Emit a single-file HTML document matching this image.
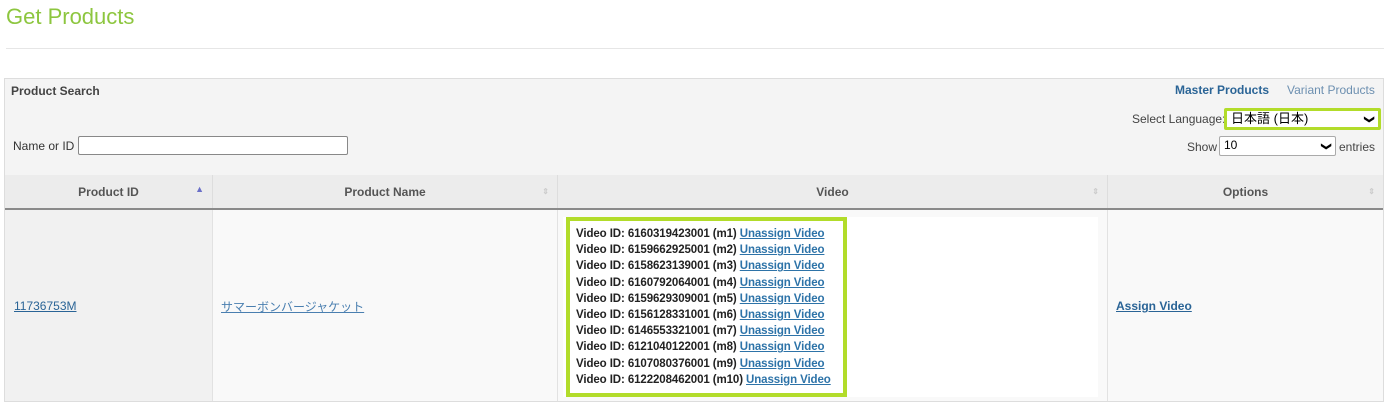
<!DOCTYPE html>
<html><head><meta charset="utf-8"><style>
*{box-sizing:border-box;margin:0;padding:0}
body{width:1396px;height:406px;background:#fff;font-family:"Liberation Sans",Arial,"Noto Sans CJK JP",sans-serif;font-size:12px;color:#333;position:relative;overflow:hidden}
.a{position:absolute}
h1{position:absolute;left:6px;top:4px;font-size:22px;font-weight:normal;color:#8dc63f}
.hr{left:6px;top:48px;width:1378px;height:1px;background:#e6e6e6}
.panel{left:4px;top:78px;width:1380px;height:324px;background:#f4f4f4;border:1px solid #ddd}
.inp{background:#fff;border:1px solid #888;border-radius:2px}
.sel{background:#fff;border:1px solid #aaa;border-radius:2px;font-size:12px;padding-left:4px;line-height:17px;color:#000}
.chev{position:absolute;right:5px;top:1px;font-size:10px;font-weight:bold;transform:rotate(90deg)}
.th{position:absolute;top:175px;height:34px;background:#ececec;border-right:1px solid #ddd;text-align:center;line-height:34px;font-weight:bold;color:#555}
.th .s{position:absolute;right:8px;top:0;font-size:8px;color:#ccc}
.hline{left:5px;top:208px;width:1378px;height:2px;background:#8a8a8a}
.td{position:absolute;top:210px;height:191px;background:#f9f9f9;border-right:1px solid #e2e2e2}
a{color:#2a6496;text-decoration:underline}
.vid{left:566px;top:217px;width:281px;height:180px;border:4px solid #b2dc2a;background:#fff;padding:5px 0 0 6px;font-weight:bold;font-size:11.5px;line-height:16.2px;color:#222;white-space:nowrap;letter-spacing:-0.1px}
.vid a{color:#2d73a8}
</style></head><body>
<h1>Get Products</h1>
<div class="a hr"></div>
<div class="a panel"></div>
<div class="a" style="left:11px;top:84px;font-weight:bold;color:#444">Product Search</div>
<div class="a" style="left:13px;top:139px">Name or ID</div>
<div class="a inp" style="left:78px;top:136px;width:270px;height:19px"></div>
<div class="a" style="left:1175px;top:83px;font-weight:bold;color:#2a6496">Master Products</div>
<div class="a" style="left:1287px;top:83px;color:#6c8fb0">Variant Products</div>
<div class="a" style="left:1132px;top:112px;color:#444">Select Language:</div>
<div class="a sel" style="left:1224px;top:108px;width:157px;height:22px;border:3px solid #b2dc2a;line-height:15px;font-size:13px">日本語 (日本)<span class="chev">&#10095;</span></div>
<div class="a" style="left:1187px;top:140px;color:#444">Show</div>
<div class="a sel" style="left:1219px;top:136px;width:117px;height:20px">10<span class="chev">&#10095;</span></div>
<div class="a" style="left:1339px;top:140px;color:#444">entries</div>

<div class="th" style="left:5px;width:208px">Product ID<span class="s" style="color:#6a6fc8;font-size:9px;top:-3px">&#9650;</span></div>
<div class="th" style="left:213px;width:345px">Product Name<span class="s">&#8661;</span></div>
<div class="th" style="left:558px;width:550px">Video<span class="s">&#8661;</span></div>
<div class="th" style="left:1108px;width:275px;border-right:none">Options<span class="s">&#8661;</span></div>
<div class="a hline"></div>

<div class="td" style="left:5px;width:208px;background:#f1f1f1"></div>
<div class="td" style="left:213px;width:345px"></div>
<div class="td" style="left:558px;width:550px"></div>
<div class="td" style="left:1108px;width:275px;border-right:none"></div>
<div class="a" style="left:563px;top:217px;width:535px;height:180px;background:#fff"></div>
<div class="a" style="left:5px;top:401px;width:1378px;height:1px;background:#ddd"></div>

<a class="a" style="left:14px;top:299px" href="#">11736753M</a>
<a class="a" style="left:221px;top:298px;color:#4a7fb0" href="#">サマーボンバージャケット</a>
<a class="a" style="left:1116px;top:299px;font-weight:bold" href="#">Assign Video</a>

<div class="a vid">
Video ID: 6160319423001 (m1) <a href="#">Unassign Video</a><br>
Video ID: 6159662925001 (m2) <a href="#">Unassign Video</a><br>
Video ID: 6158623139001 (m3) <a href="#">Unassign Video</a><br>
Video ID: 6160792064001 (m4) <a href="#">Unassign Video</a><br>
Video ID: 6159629309001 (m5) <a href="#">Unassign Video</a><br>
Video ID: 6156128331001 (m6) <a href="#">Unassign Video</a><br>
Video ID: 6146553321001 (m7) <a href="#">Unassign Video</a><br>
Video ID: 6121040122001 (m8) <a href="#">Unassign Video</a><br>
Video ID: 6107080376001 (m9) <a href="#">Unassign Video</a><br>
Video ID: 6122208462001 (m10) <a href="#">Unassign Video</a>
</div>
</body></html>
